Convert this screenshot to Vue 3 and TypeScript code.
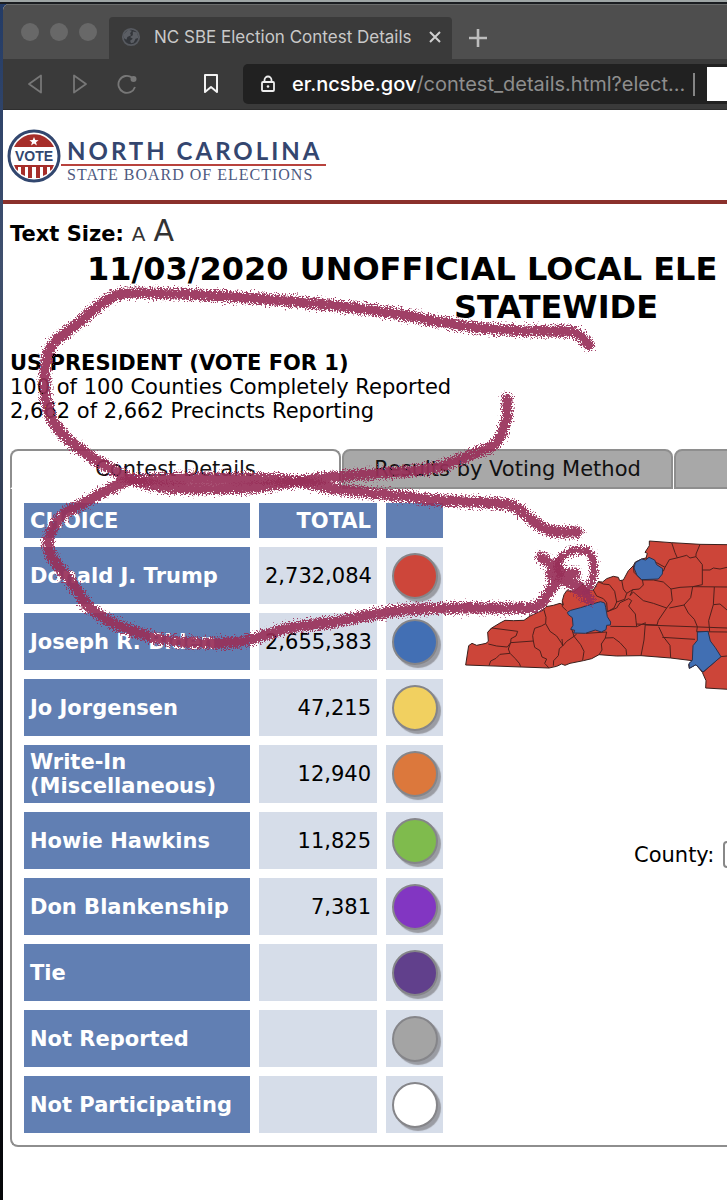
<script setup lang="ts">
interface Choice {
  name: string
  total: string
  tone: string
}

const choices: Choice[] = [
  { name: 'Donald J. Trump', total: '2,732,084', tone: 'red' },
  { name: 'Joseph R. Biden', total: '2,655,383', tone: 'blue' },
  { name: 'Jo Jorgensen', total: '47,215', tone: 'yellow' },
  { name: 'Write-In (Miscellaneous)', total: '12,940', tone: 'orange' },
  { name: 'Howie Hawkins', total: '11,825', tone: 'green' },
  { name: 'Don Blankenship', total: '7,381', tone: 'purple' },
  { name: 'Tie', total: '', tone: 'violet' },
  { name: 'Not Reported', total: '', tone: 'gray' },
  { name: 'Not Participating', total: '', tone: 'white' },
]

// County borders inside the state outline
const borders: string[] = [
  'M113 335 125 322 203 332 198 346 183 354 182 366 172 379 140 376 115 370',
  'M182 366 250 361', 'M182 366 175 385 180 398 150 401 138 413 122 421 117 435',
  'M180 398 196 414 208 428 212 438',
  'M250 361 254 380 270 390 276 409 290 415 284 428 297 442',
  'M250 361 248 345 254 323 274 316 287 309 M282 268 288 290 287 309 300 332 320 346 335 368 338 376 328 384 325 405 311 420 310 435',
  'M338 376 350 362 372 347 380 340 M372 347 392 372 402 392 398 418',
  'M338 376 336 355 M350 270 337 258 337 240', 'M372 347 366 328',
  'M408 338 470 334 466 352 454 370 456 388 447 402',
  'M466 352 490 351 510 366 528 386 530 403',
  'M481 317 560 318 587 306 M586 308 582 358 573 405',
  'M430 208 440 226 460 234 470 246 472 273 M445 183 460 190 478 192 494 212 500 244 492 262 472 273',
  'M515 178 520 205 530 218 524 236 500 244',
  'M472 273 500 262 510 246 536 234 545 240 536 256 556 280 558 300 560 318',
  'M530 218 548 207 568 205 580 193 577 176',
  'M548 207 540 225 550 214 580 240 610 248 650 262',
  'M550 135 552 155 575 178 610 178 640 184 663 205 667 240 650 262 625 299 621 313 560 310',
  'M588 112 620 126 645 140 640 152',
  'M645 140 658 117 680 112 710 104 720 112 738 108 757 132 757 192 728 198',
  'M665 66 675 96 682 112 M750 71 738 100 738 108',
  'M757 148 780 148 790 142 810 145 831 140',
  'M663 205 690 200 728 198 722 231 702 253 658 262',
  'M728 198 831 199 M793 199 790 252 776 300 779 332',
  'M702 253 715 277 733 296 742 318 740 333',
  'M790 252 810 250 831 268',
  'M586 313 831 322 M626 318 640 348 660 374 662 412',
  'M637 350 735 356 M740 333 831 334',
  'M812 408 831 406 M812 408 760 454',
]
</script>

<template>
  <div class="desktop">
    <div class="window">
      <div class="tabstrip">
        <div class="lights"><i></i><i></i><i></i></div>
        <div class="browser-tab">
          <svg class="globe" viewBox="0 0 22 22" aria-hidden="true">
            <circle cx="11" cy="11" r="9" fill="#33363b" stroke="#575a60" stroke-width="2" />
            <path d="M3 8 8 3l4 1-2 3 1 2-4 2-1 3-3-2zM13 5l5 1 1 6-3 1-2 4-3 1-1-3 3-2-3-2 3-2z" fill="#5b5e64" />
          </svg>
          <span class="tab-title">NC SBE Election Contest Details</span>
          <button class="plain" type="button" aria-label="Close tab">
            <svg width="12" height="12" viewBox="0 0 12 12"><path d="M1 1 11 11M11 1 1 11" stroke="#cfcfcf" stroke-width="2" /></svg>
          </button>
        </div>
        <button class="plain new-tab" type="button" aria-label="New tab">
          <svg width="18" height="18" viewBox="0 0 18 18"><path d="M9 0v18M0 9h18" stroke="#bdbdbd" stroke-width="2.600" /></svg>
        </button>
      </div>

      <div class="toolbar">
        <nav class="nav-buttons">
          <button class="plain" type="button" aria-label="Back">
            <svg width="16" height="20" viewBox="0 0 16 20"><path d="M14 1.500v17L2 10z" fill="none" stroke="#777" stroke-width="1.800" stroke-linejoin="round" /></svg>
          </button>
          <button class="plain" type="button" aria-label="Forward">
            <svg width="16" height="20" viewBox="0 0 16 20"><path d="M2 1.500v17L14 10z" fill="none" stroke="#777" stroke-width="1.800" stroke-linejoin="round" /></svg>
          </button>
          <button class="plain" type="button" aria-label="Reload">
            <svg width="20" height="20" viewBox="0 0 20 20"><path d="M15 3.500A8.500 8.500 0 1 0 18 13" fill="none" stroke="#777" stroke-width="1.800" /><circle cx="16.500" cy="5" r="3" fill="#777" /></svg>
          </button>
        </nav>
        <button class="plain bookmark" type="button" aria-label="Bookmark">
          <svg width="16" height="20" viewBox="0 0 16 20"><path d="M2 1h12v17l-6-5-6 5z" fill="none" stroke="#f2f2f2" stroke-width="2" stroke-linejoin="round" /></svg>
        </button>
        <div class="address">
          <svg width="14" height="18" viewBox="0 0 14 18" aria-hidden="true">
            <path d="M3.500 7V5a3.500 3.500 0 0 1 7 0v2" fill="none" stroke="#eee" stroke-width="1.800" />
            <rect x="1" y="7" width="12" height="9" rx="1" fill="none" stroke="#eee" stroke-width="1.800" />
            <circle cx="7" cy="11.500" r="1.300" fill="#eee" />
          </svg>
          <span class="url"><b>er.ncsbe.gov</b>/contest_details.html?elect...</span>
          <span class="divider"></span>
          <span class="blank"></span>
        </div>
      </div>

      <main class="page">
        <header class="site-header">
          <svg class="seal" viewBox="0 0 54 54" aria-hidden="true">
            <circle cx="27" cy="27" r="25" fill="#fff" stroke="#32476f" stroke-width="3" />
            <path d="M7 18a22 22 0 0 1 40 0z" fill="#a62e2a" />
            <path d="m27 8 1.300 3 3.300.2-2.600 2 .9 3.200-2.900-1.800-2.900 1.800.9-3.200-2.600-2 3.300-.2z" fill="#fff" />
            <path d="M7 36h40q-1 4-4 6v-4h-3v7l-4 2v-9h-3v11h-4V38h-4v11h-4V38h-3v9l-4-2v-7h-3v4q-3-2-4-6z" fill="#a62e2a" />
            <text x="27" y="32" text-anchor="middle" class="seal-text">VOTE</text>
          </svg>
          <div class="brand">
            <span class="brand-name">NORTH CAROLINA</span>
            <span class="brand-sub">STATE BOARD OF ELECTIONS</span>
          </div>
        </header>

        <div class="text-size">
          <strong>Text Size:</strong>
          <button class="plain small-a" type="button" aria-label="Normal text">A</button>
          <button class="plain large-a" type="button" aria-label="Large text">A</button>
        </div>

        <h1><span>11/03/2020 UNOFFICIAL LOCAL ELE</span><span class="scope">STATEWIDE</span></h1>

        <section class="contest">
          <h2>US PRESIDENT (VOTE FOR 1)</h2>
          <p>100 of 100 Counties Completely Reported</p>
          <p>2,662 of 2,662 Precincts Reporting</p>
        </section>

        <div class="tabs">
          <button class="tab active" type="button">Contest Details</button>
          <button class="tab" type="button">Results by Voting Method</button>
          <button class="tab" type="button" aria-label="More results"></button>
        </div>

        <section class="panel">
          <table>
            <thead>
              <tr>
                <th class="choice" scope="col">CHOICE</th>
                <th class="total" scope="col">TOTAL</th>
                <th class="key" scope="col" aria-label="Color"></th>
              </tr>
            </thead>
            <tbody>
              <tr v-for="c in choices" :key="c.name">
                <th class="choice" scope="row">{{ c.name }}</th>
                <td class="total">{{ c.total }}</td>
                <td class="key"><span class="dot" :class="c.tone"></span></td>
              </tr>
            </tbody>
          </table>

          <div class="map-side">
            <svg class="map" viewBox="45 55 786 453" role="img" aria-label="County map">
              <path
                class="land"
                d="M47 433 56 375 66 368 80 374 108 368 115 362 113 335 125 322 150 307 165 299 190 300 222 299 240 286 260 277 280 268 288 258 310 254 330 248 340 253 337 240 342 222 350 210 372 212 400 190 412 208 430 208 445 183 458 184 470 174 490 167 505 170 509 180 520 178 535 150 550 135 556 124 575 115 588 112 592 98 585 95 598 75 598 61 665 66 750 71 835 72V506L767 502 768 480 757 455 738 432 718 443 716 432 727 420 662 412 573 405 500 406 447 402 425 414 400 420 360 428 345 434 335 430 320 437 297 442z"
              />
              <path v-for="(d, i) in borders" :key="i" class="border" :d="d" />
              <path class="won" d="m352 275 10-6 30-8 38-12 22-6 12 4 3 13 5 28 10 16-1 9-11 1-2 13-14 7-18-6-30 10-35-1 3-8-12-3 7-12-2-23-12-9z" />
              <path class="won" d="m552 142 4-16 19-11 12 3 10-8 17 8 6 14 18 12-1 16-12 15-50 2-14-13z" />
              <path class="won" d="m742 334 32-2 7 29 15 20 17 27-54 46-21-22-20 11-1-15 10-9 2-44 13-16z" />
            </svg>
            <div class="county">
              <label for="county">County:</label>
              <select id="county"><option></option></select>
            </div>
          </div>
        </section>
      </main>
    </div>

    <svg class="ink" width="727" height="1200" viewBox="0 0 727 1200" aria-hidden="true">
      <defs>
        <filter id="chalk" filterUnits="userSpaceOnUse" x="0" y="250" width="727" height="450" color-interpolation-filters="sRGB">
          <feTurbulence type="fractalNoise" baseFrequency="0.75" numOctaves="2" seed="4" result="noise" />
          <feDisplacementMap in="SourceGraphic" in2="noise" scale="13" xChannelSelector="R" yChannelSelector="G" />
        </filter>
      </defs>
      <g filter="url(#chalk)">
        <path d="M589 345Q577 331 568 331Q530 332 490 329C450 326 400 312 363 309C300 301 200 293 125 293C105 296 88 316 73 327L55 341C43 355 45 375 45 390C46 418 62 436 77 447C95 460 120 476 140 482C165 491 215 489 250 488C275 486 300 480 333 477C370 473 420 473 446 465L488 448C505 440 508 420 507 399" />
        <path d="M578 532L555 532C535 529 529 512 510 505C490 501 450 503 425 499C395 495 370 493 333 489C300 480 280 479 253 478L187 478L130 480C105 488 90 502 68 511C50 524 44 545 51 556C61 572 73 580 83 600C98 620 125 629 150 637C180 644 220 644 240 642C265 637 280 628 300 626C335 624 360 616 396 611C430 606 490 609 530 608C545 607 546 592 556 583" />
        <path class="thin" d="M560 574Q552 558 572 551Q594 545 594 568Q594 584 586 590" />
        <path d="M541 557 558 571 575 587 590 600M557 564 566 581 579 586M551 575 575 573" />
      </g>
    </svg>
  </div>
</template>

<style>
body {
  margin: 0;
}
</style>

<style scoped>
* {
  box-sizing: border-box;
}
.desktop {
  position: relative;
  min-height: 100vh;
  padding: 4px 0 0 3px;
  overflow: hidden;
  background: linear-gradient(#9da4a4 0 2px, #191c20 2px 4px, transparent 4px),
    linear-gradient(#233b66, #40506e 22%, #37445c 38%, #18243a 55%, #0b0e18 80%, #050608);
  font-family: Verdana, "DejaVu Sans", sans-serif;
  font-size: 21px;
  color: #000;
}
.window {
  display: flex;
  flex-direction: column;
  min-height: calc(100vh - 4px);
  border-radius: 6px 0 0 0;
  overflow: hidden;
  background: #fff;
}
.plain {
  display: flex;
  padding: 0;
  border: 0;
  background: none;
  font: inherit;
}
.tabstrip {
  display: flex;
  height: 55px;
  padding-top: 12px;
  border-top: 1px solid #6a6c6c;
  background: #4e4e4e;
}
.lights {
  display: flex;
  flex: none;
  gap: 11px;
  width: 106px;
  padding: 6px 0 0 18px;
}
.lights i {
  width: 18px;
  height: 18px;
  border-radius: 50%;
  background: #686868;
}
.browser-tab {
  display: flex;
  flex: none;
  align-items: center;
  gap: 13px;
  width: 343px;
  padding: 0 11px 2px 12px;
  border-radius: 4px 4px 0 0;
  background: #3a3a3a;
}
.globe {
  flex: none;
  width: 20px;
  height: 20px;
}
.tab-title {
  flex: 1;
  white-space: nowrap;
  font: 17px Inter, sans-serif;
  color: #c9c9c9;
}
.new-tab {
  align-self: center;
  margin-left: 17px;
}
.toolbar {
  display: flex;
  align-items: center;
  height: 51px;
  border-bottom: 1px solid #2e2e2e;
  background: #3a3a3a;
}
.nav-buttons {
  display: flex;
  flex: none;
  gap: 29px;
  width: 200px;
  padding-left: 24px;
}
.bookmark {
  flex: none;
  width: 40px;
}
.address {
  display: flex;
  flex: 1;
  align-items: center;
  min-width: 0;
  height: 40px;
  padding-left: 18px;
  border-radius: 5px 0 0 5px;
  background: #212121;
}
.address svg {
  flex: none;
}
.url {
  flex: 1;
  margin-left: 17px;
  white-space: nowrap;
  font: 20px Inter, sans-serif;
  color: #8e8e8e;
}
.url b {
  font-weight: 500;
  color: #fff;
}
.divider {
  width: 2px;
  height: 23px;
  background: #858585;
}
.blank {
  width: 20px;
  height: 34px;
  margin-left: 12px;
  background: #fff;
}
.page {
  flex: 1;
}
.site-header {
  display: flex;
  height: 94px;
  padding: 19px 0 0 4px;
  border-bottom: 4px solid #8b312c;
}
.seal {
  flex: none;
  width: 54px;
  height: 54px;
}
.seal-text {
  font: bold 14px "Liberation Sans", sans-serif;
  fill: #32476f;
}
.brand {
  display: flex;
  flex-direction: column;
  height: 54px;
  white-space: nowrap;
}
.brand-name {
  height: 37px;
  padding: 8px 4px 0 6px;
  border-bottom: 2px solid #b8423d;
  font: bold 24px/28px Lato, sans-serif;
  letter-spacing: 3px;
  color: #34466f;
}
.brand-sub {
  padding-left: 6px;
  font: 16px/18px "Liberation Serif", serif;
  letter-spacing: 1px;
  color: #4d5980;
}
.text-size {
  display: flex;
  align-items: baseline;
  gap: 8px;
  height: 46px;
  padding: 8px 0 0 7px;
  line-height: 38px;
  white-space: nowrap;
}
.small-a {
  font-size: 20px;
  color: #333;
}
.large-a {
  font-size: 30px;
  color: #333;
}
h1 {
  margin: 0;
  padding-left: 84px;
  font-size: 32px;
  line-height: 38px;
  white-space: nowrap;
}
h1 span {
  display: block;
}
.scope {
  margin-left: 367px;
}
.contest {
  padding: 25px 0 0 7px;
  line-height: 24px;
}
h2,
p {
  margin: 0;
  font-size: 21px;
}
.tabs {
  display: flex;
  gap: 1px;
  height: 40px;
  margin: 26px 0 0 7px;
}
.tab {
  flex: 0 0 331px;
  padding: 0;
  border: 2px solid #8e8e8e;
  border-radius: 8px 8px 0 0;
  background: #a8a8a8;
  font: inherit;
  color: #111;
}
.tab.active {
  border-bottom-color: #fff;
  background: #fff;
}
.panel {
  display: flex;
  gap: 13px;
  margin: 0 0 0 7px;
  padding: 5px 0 3px 3px;
  border: solid #8e8e8e;
  border-width: 0 0 2px 2px;
  border-radius: 0 0 0 8px;
}
table {
  flex: none;
  width: 437px;
  border-spacing: 9px;
  table-layout: fixed;
}
th,
td {
  height: 57px;
  padding: 0 6px;
  line-height: 24px;
  background: #d6dde9;
}
thead th {
  height: 35px;
}
th {
  background: #617fb3;
  color: #fff;
}
.choice {
  width: 226px;
  text-align: left;
}
.total {
  width: 118px;
  text-align: right;
}
.key {
  width: 57px;
}
tbody tr:nth-child(4) > * {
  height: 58px;
}
.dot {
  display: block;
  width: 46px;
  height: 46px;
  border: 2px solid #858589;
  border-radius: 50%;
  box-shadow: 3px 3px 1px #9a9ca3;
}
.red { background: #cd463a; }
.blue { background: #426fb4; }
.yellow { background: #f1d060; }
.orange { background: #dc783c; }
.green { background: #7fbb4d; }
.purple { background: #8236c2; }
.violet { background: #61408c; }
.gray { background: #a4a4a4; }
.white { background: #fff; }
.map-side {
  flex: 1;
  min-width: 0;
  padding-top: 45px;
}
.map {
  display: block;
  width: 100%;
}
.land {
  fill: #cc4539;
  stroke: #39201d;
  stroke-width: 3;
  stroke-linejoin: round;
}
.border {
  fill: none;
  stroke: #51201c;
  stroke-width: 3;
  stroke-linejoin: round;
}
.won {
  fill: #416fb3;
  stroke: #29324e;
  stroke-width: 3;
  stroke-linejoin: round;
}
.county {
  display: flex;
  align-items: center;
  gap: 9px;
  margin: 151px 0 0 169px;
}
select {
  flex: none;
  width: 180px;
  height: 27px;
  border: 2px solid #888;
  border-radius: 4px;
  background: #fff;
  font: inherit;
}
.ink {
  position: absolute;
  top: 0;
  left: 0;
  pointer-events: none;
}
.ink path {
  fill: none;
  stroke: #983059;
  stroke-width: 11;
  stroke-linecap: round;
  stroke-linejoin: round;
  opacity: 0.92;
}
.ink .thin {
  stroke-width: 8;
}
</style>
